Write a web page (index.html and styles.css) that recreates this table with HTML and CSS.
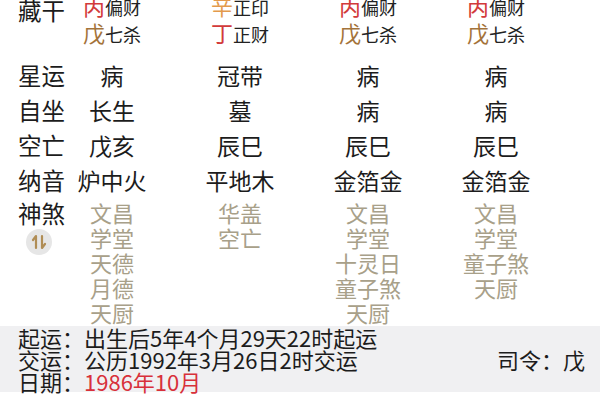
FILE: index.html
```html
<!DOCTYPE html>
<html lang="zh">
<head>
<meta charset="utf-8">
<link rel="stylesheet" href="styles.css">
</head>
<body>
<div class="chart">
  <div class="row row-hidden">
    <div class="label label-hidden">藏干</div>
    <div class="cell"><div class="stems">
      <div class="sline"><span class="stem red">丙</span><span class="god">偏财</span></div>
      <div class="sline"><span class="stem brown">戊</span><span class="god">七杀</span></div>
    </div></div>
    <div class="cell"><div class="stems">
      <div class="sline"><span class="stem orange">辛</span><span class="god">正印</span></div>
      <div class="sline"><span class="stem red">丁</span><span class="god">正财</span></div>
    </div></div>
    <div class="cell"><div class="stems">
      <div class="sline"><span class="stem red">丙</span><span class="god">偏财</span></div>
      <div class="sline"><span class="stem brown">戊</span><span class="god">七杀</span></div>
    </div></div>
    <div class="cell"><div class="stems">
      <div class="sline"><span class="stem red">丙</span><span class="god">偏财</span></div>
      <div class="sline"><span class="stem brown">戊</span><span class="god">七杀</span></div>
    </div></div>
  </div>

  <div class="row row-line">
    <div class="label">星运</div>
    <div class="cell">病</div><div class="cell">冠带</div><div class="cell">病</div><div class="cell">病</div>
  </div>
  <div class="row row-line">
    <div class="label">自坐</div>
    <div class="cell">长生</div><div class="cell">墓</div><div class="cell">病</div><div class="cell">病</div>
  </div>
  <div class="row row-line">
    <div class="label">空亡</div>
    <div class="cell">戊亥</div><div class="cell">辰巳</div><div class="cell">辰巳</div><div class="cell">辰巳</div>
  </div>
  <div class="row row-line">
    <div class="label">纳音</div>
    <div class="cell">炉中火</div><div class="cell">平地木</div><div class="cell">金箔金</div><div class="cell">金箔金</div>
  </div>

  <div class="row row-sha">
    <div class="label label-sha">
      <div>神煞</div>
      <div class="toggle">
        <svg viewBox="0 0 26 26" width="26" height="26">
          <path d="M10 19 V7 L7 11" fill="none" stroke="#b08d55" stroke-width="2.2" stroke-linecap="round" stroke-linejoin="round"/>
          <path d="M16 7 V19 L19 15" fill="none" stroke="#b08d55" stroke-width="2.2" stroke-linecap="round" stroke-linejoin="round"/>
        </svg>
      </div>
    </div>
    <div class="cell sha"><div>文昌</div><div>学堂</div><div>天德</div><div>月德</div><div>天厨</div></div>
    <div class="cell sha"><div>华盖</div><div>空亡</div></div>
    <div class="cell sha"><div>文昌</div><div>学堂</div><div>十灵日</div><div>童子煞</div><div>天厨</div></div>
    <div class="cell sha"><div>文昌</div><div>学堂</div><div>童子煞</div><div>天厨</div></div>
  </div>

  <div class="footer">
    <div class="fline">起运：出生后5年4个月29天22时起运</div>
    <div class="fline fline-split"><span>交运：公历1992年3月26日2时交运</span><span class="siling">司令：戊</span></div>
    <div class="fline">日期：<span class="date">1986年10月</span></div>
  </div>
</div>
</body>
</html>
```

FILE: styles.css
```css
html, body {
  margin: 0;
  padding: 0;
  background: #ffffff;
  overflow: hidden;
}
body {
  font-family: "Noto Sans CJK SC", "Noto Sans", sans-serif;
  color: #1c1c1c;
  width: 600px;
  height: 400px;
}
.chart {
  margin-top: -8px;
}
.row {
  display: grid;
  grid-template-columns: 48px repeat(4, 128px);
}
.label {
  padding-left: 18px;
  white-space: nowrap;
  font-size: 23.5px;
}
.cell {
  text-align: center;
  white-space: nowrap;
}
.row-hidden {
  height: 54px;
  padding-bottom: 12px;
}
.label-hidden {
  line-height: 36px;
}
.stems {
  display: inline-flex;
  flex-direction: column;
  text-align: left;
}
.sline {
  display: flex;
  align-items: baseline;
  height: 27px;
  line-height: 27px;
}
.stem {
  font-size: 22px;
}
.god {
  font-size: 18px;
  color: #222;
}
.red { color: #d23a3a; }
.brown { color: #a4733a; }
.orange { color: #e39a4c; }

.row-line {
  height: 35px;
  line-height: 35px;
  font-size: 23px;
}
.row-sha {
  height: 128px;
}
.label-sha {
  line-height: 30px;
}
.toggle {
  width: 26px;
  height: 26px;
  margin: 1px 0 0 8px;
  border-radius: 50%;
  background: #e6e6e6;
  display: flex;
  align-items: center;
  justify-content: center;
}
.toggle svg {
  display: block;
}
.sha {
  padding-top: 2px;
  font-size: 22px;
  line-height: 25px;
  color: #a8a089;
}
.footer {
  position: relative;
  background: #f0f0f2;
  height: 66px;
  padding: 0 15px 0 18px;
  font-size: 22px;
  line-height: 22px;
  color: #1c1c1c;
}
.fline {
  white-space: nowrap;
}
.fline-split {
  display: flex;
  justify-content: space-between;
}
.date {
  color: #d8303a;
}
```
